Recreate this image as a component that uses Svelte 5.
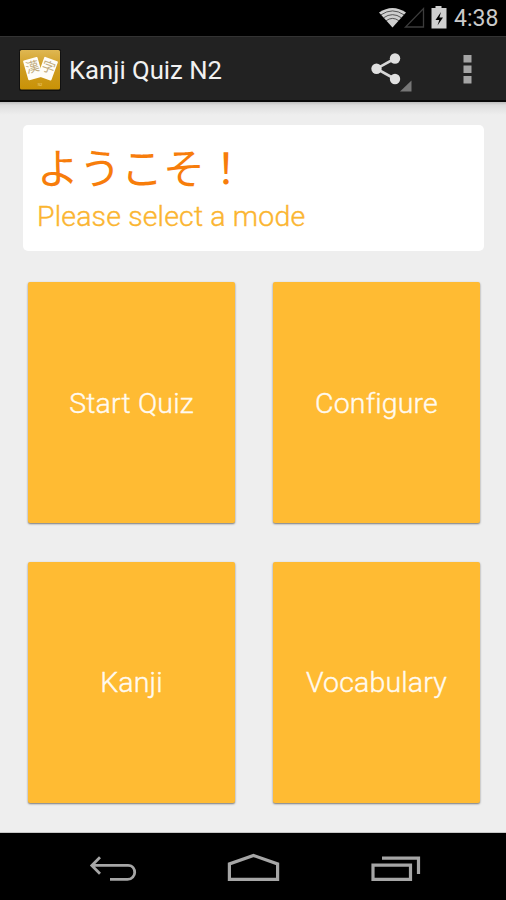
<script>
  const modes = ['Start Quiz', 'Configure', 'Kanji', 'Vocabulary'];
</script>

<div class="screen">
  <div class="status">
    <svg width="64" height="36" viewBox="378 0 64 36" aria-hidden="true">
      <path d="M379 12.500Q392.500 3.500 406 12.500L392.500 27.500Z" fill="#cfcfcf" />
      <g fill="none" stroke="#333" stroke-width=".8">
        <path d="M381 14.800Q392.500 7 404 14.800" />
        <path d="M383.500 17.800Q392.500 11.500 401.500 17.800" />
        <path d="M386 20.800Q392.500 16 399 20.800" />
      </g>
      <path d="M423.500 8.500V27H405.500Z" fill="none" stroke="#3c3c3c" stroke-width="1.300" />
      <path d="M435.500 6h6v2h5v20.500h-15V8h4z" fill="#cfcfcf" />
      <path d="M441 12l-5.500 8h3.800l-1.800 5.500 5.500-8h-3.600z" fill="#000" />
    </svg>
    <span class="clock">4:38</span>
  </div>

  <header>
    <svg class="logo" width="42" height="42" viewBox="0 0 42 42" aria-hidden="true">
      <defs>
        <linearGradient id="gold" x1="0" y1="0" x2="0" y2="1">
          <stop offset="0" stop-color="#dfb752" />
          <stop offset=".45" stop-color="#cf9d22" />
          <stop offset="1" stop-color="#c99206" />
        </linearGradient>
      </defs>
      <rect x="0" y="0" width="42" height="42" rx="2" fill="#111" />
      <rect x="1" y="1" width="40" height="39.500" rx="1.500" fill="url(#gold)" />
      <g transform="rotate(20 29 20)">
        <rect x="21.500" y="9.500" width="14.500" height="20.500" rx="1" fill="#fffdf8" />
        <text x="22" y="23" font-size="13.500" fill="#c2ad80">字</text>
      </g>
      <g transform="rotate(-16 13.500 20)">
        <rect x="6.500" y="9.500" width="15" height="20.500" rx="1" fill="#fffdf8" />
        <text x="7.200" y="23" font-size="13.500" fill="#c2ad80">漢</text>
      </g>
      <text x="21" y="36.500" font-size="3.500" text-anchor="middle" fill="#f0d58b">N2</text>
    </svg>
    <h1>Kanji Quiz N2</h1>
    <svg class="actions" width="126" height="66" viewBox="360 36 126 66" aria-hidden="true">
      <path d="M395 58.500L376.500 68.700 395 79" fill="none" stroke="#d6d6d6" stroke-width="2.600" />
      <g fill="#e0e0e0">
        <circle cx="395" cy="58.500" r="5.200" />
        <circle cx="376.500" cy="68.700" r="5.200" />
        <circle cx="395" cy="79" r="5.200" />
      </g>
      <path d="M411.500 80.500V91.500H400Z" fill="#777" />
      <path d="M463.500 55h8v7.500h-8zM463.500 65.500h8v7.500h-8zM463.500 76h8v7.500h-8z" fill="#a5a5a5" />
    </svg>
  </header>

  <main>
    <section class="welcome">
      <h2>ようこそ！</h2>
      <p>Please select a mode</p>
    </section>
    <div class="modes">
      {#each modes as mode}
        <button>{mode}</button>
      {/each}
    </div>
  </main>

  <nav>
    <svg width="506" height="67" viewBox="0 833 506 67" fill="none" stroke="#a6a6a6" stroke-width="2.800" aria-hidden="true">
      <path d="M100 857.200L91.800 865.400 100 873.700M92 865.400H128C133 865.400 134.700 869.500 134.700 872.500S132 879.400 127.500 879.400H110" />
      <path d="M229.400 879.400V864L253.500 855.500 277.600 864V879.400Z" stroke-width="3.200" />
      <path d="M373 865.200H410.500V879.400H373ZM382 858.200H418.500V874" stroke-width="3.200" />
    </svg>
  </nav>
</div>

<style>
  :global(body) {
    margin: 0;
    background: #000;
  }
  .screen {
    width: 506px;
    height: 900px;
    display: flex;
    flex-direction: column;
    overflow: hidden;
    background: #eee;
    font-family: Roboto, "Noto Sans CJK JP", sans-serif;
  }
  .status {
    height: 36px;
    flex: none;
    box-sizing: border-box;
    padding-right: 8px;
    display: flex;
    justify-content: flex-end;
    background: #000;
    color: #cacaca;
  }
  .status svg {
    overflow: visible;
  }
  .clock {
    width: 44px;
    margin-left: 12px;
    font-size: 23px;
    line-height: 38px;
    white-space: nowrap;
  }
  header {
    height: 66px;
    flex: none;
    box-sizing: border-box;
    display: flex;
    align-items: center;
    padding: 0 20px 0 19px;
    background: #222;
    border-top: 1px solid #333;
    border-bottom: 2px solid #090909;
  }
  .logo {
    margin-top: 2px;
    font-family: "Noto Sans CJK JP", sans-serif;
  }
  h1 {
    margin: 0 0 0 8px;
    padding-top: 3px;
    color: #f1f1f1;
    font-size: 25.700px;
    font-weight: 400;
    line-height: 34px;
    white-space: nowrap;
  }
  .actions {
    margin-left: auto;
    flex: none;
  }
  main {
    flex: 1;
    padding: 23px 22px 0 23px;
    background: linear-gradient(#bdbdbd 0, #dcdcdc 3px, #e4e4e4 7px, #eee 13px);
    border-bottom: 1px solid #c6c6c6;
  }
  .welcome {
    height: 126px;
    box-sizing: border-box;
    padding: 20px 14px 0;
    border-radius: 5px;
    background: #fff;
  }
  h2 {
    margin: 0;
    color: #f77d0b;
    font-size: 42px;
    font-weight: 400;
    line-height: 50px;
  }
  p {
    margin: 5px 0 0;
    color: #fbb530;
    font-size: 28.500px;
    font-weight: 300;
    letter-spacing: 0.150px;
    line-height: 34px;
    white-space: nowrap;
    -webkit-text-stroke: 0.400px currentColor;
  }
  .modes {
    display: grid;
    grid-template-columns: 207px 207px;
    grid-auto-rows: 241px;
    gap: 38.500px 38px;
    padding: 31px 0 0 5px;
  }
  button {
    border: 0;
    padding: 2px 0 0;
    border-radius: 2px;
    background: #fb3;
    box-shadow: 0 1px 2px #777;
    color: #fffaf0;
    font: 300 28.500px/34px Roboto, sans-serif;
    letter-spacing: 0.150px;
    -webkit-text-stroke: 0.400px currentColor;
  }
  nav {
    height: 67px;
    flex: none;
    background: #000;
  }
  nav svg {
    display: block;
  }
</style>
